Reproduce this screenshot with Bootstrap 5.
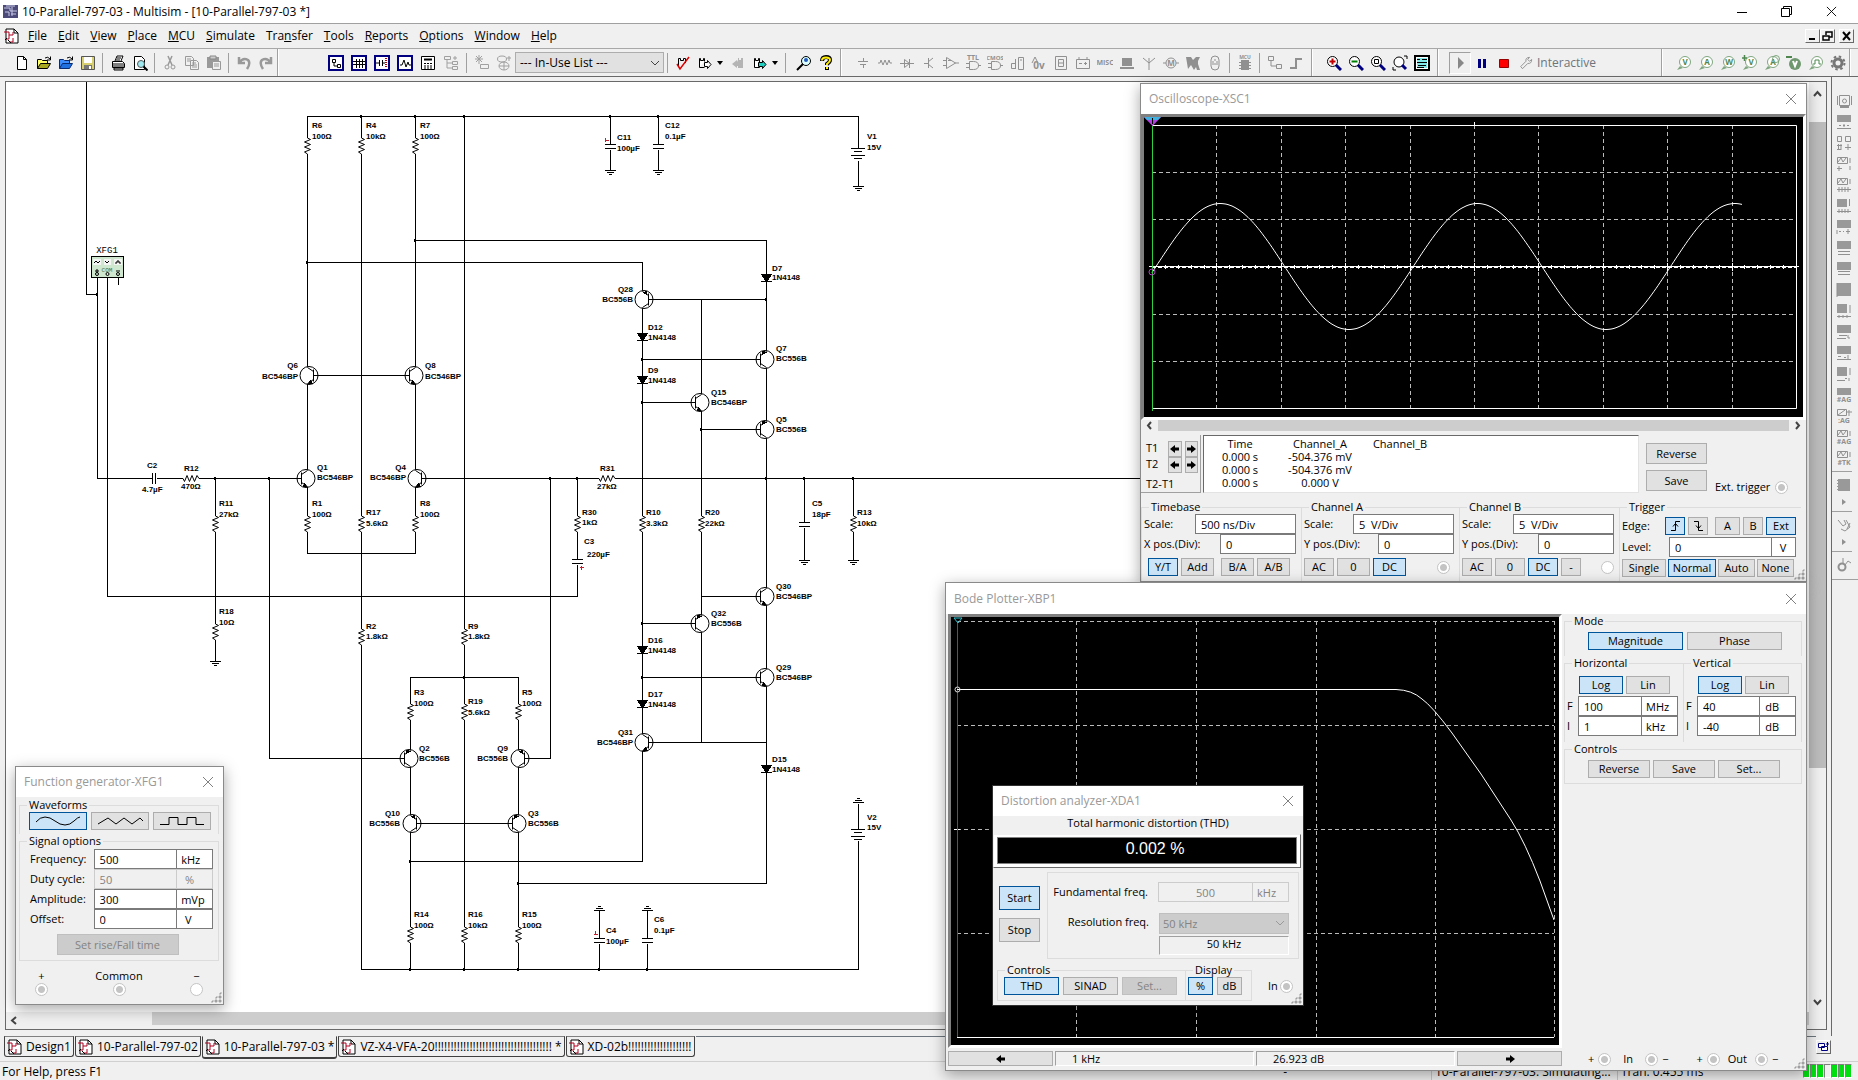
<!DOCTYPE html>
<html lang="en">
<head>
  <meta charset="UTF-8">
  <title>10-Parallel-797-03 - Multisim</title>
  <meta name="viewport" content="width=device-width, initial-scale=1">
  <!-- Bootstrap 5 CDN -->
  <link href="https://cdn.jsdelivr.net/npm/bootstrap@5.3.3/dist/css/bootstrap.min.css" rel="stylesheet">
  <style>
    body {
      background: #f0f0f0;
      color: #000;
      font-family: "Open Sans", "Noto Sans", sans-serif;
      font-size: 12px;
      line-height: 16px;
    }
    svg { display: block; }

    /* title bar, menu, toolbars */
    .titlebar { height: 24px; background: #fff; border-bottom: 1px solid #a0a0a0; padding-left: 3px; }
    .sysbtn { width: 45px; height: 22px; padding: 0; border: 0; background: none; }
    .menubar { height: 25px; border-bottom: 1px solid #a8a8a8; padding-left: 4px; }
    .menubar a { color: #000; text-decoration: none; margin-right: 11px; }
    .mdibtn { width: 15px; height: 14px; padding: 0; background: #f0f0f0; border: 1px solid; border-color: #fff #696969 #696969 #fff; }
    .toolrow { height: 28px; border-bottom: 1px solid #696969; }
    .band { height: 27px; border-right: 1px solid #a0a0a0; box-shadow: 1px 0 0 #fff; }
    .toolgap { width: 36px; }
    .padder { width: 3px; }
    .tool { width: 22px; height: 22px; padding: 3px; border: 0; background: none; }
    .tool.wide { width: 23px; }
    .tool.slim { width: 11px; padding: 3px 0; }
    .tool svg, .inst svg { width: 16px; height: 16px; }
    .tool.pressed { border: 1px solid; border-color: #a0a0a0 #fff #fff #a0a0a0; padding: 2px; }
    .vsep { width: 1px; height: 20px; margin: 0 4px 0 3px; background: #a0a0a0; }
    .uselist { width: 149px; height: 21px; border: 1px solid #adadad; border-radius: 0; background: #e1e1e1; padding: 0 4px; font-size: 12px; appearance: none; }

    /* work area */
    .sheet { margin: 4px 4px 6px 5px; border: 1px solid #696969; background: #fff; min-width: 0; }
    .schematic { width: 100%; height: 100%; }
    .vbar { width: 17px; background: #f0f0f0; }
    .hbar { height: 17px; background: #f0f0f0; }
    .thumb { background: #cdcdcd; }
    .vthumb { height: 646px; background: #bcbcbc; }
    .hlead { width: 146px; }
    .instbar { width: 27px; border-left: 1px solid #696969; }
    .inststrip { border-bottom: 1px solid #a0a0a0; padding: 13px 0 4px 0; }
    .inst { width: 24px; height: 21px; padding: 3px 4px; border: 0; background: none; }
    .inst.low { height: 13px; padding: 0 4px; }
    .inst.low svg { height: 10px; }
    .hsep { height: 1px; width: 20px; background: #a0a0a0; margin: 3px 0 2px 0; }

    /* sheet tabs and status line */
    .tabrow { height: 25px; }
    .sheettab { height: 21px; border: 1px solid #404040; border-top-color: #808080; border-radius: 0 0 3px 3px; background: #f0f0f0; padding: 0 2px; gap: 3px; color: #000; text-decoration: none; white-space: nowrap; margin-right: 1px; }
    .sheettab.current { height: 23px; border-top-color: #f0f0f0; border-bottom-width: 2px; }
    .statusrow { height: 19px; border-top: 1px solid #d0d0d0; padding: 2px 2px 0 2px; white-space: nowrap; }
    .cellpane { width: 186px; border-left: 1px solid #c8c8c8; padding-left: 3px; }
    .led { width: 7px; height: 14px; background: #00e010; border: 1px solid; border-color: #808080 #fff #fff #808080; }
    .led.off { background: #f0f0f0; }

    /* floating instrument windows */
    .inswin {
      position: absolute;
      background: #f0f0f0;
      border: 1px solid #8a8a8a;
      box-shadow: 0 4px 14px rgba(0, 0, 0, 0.35);
      font-size: 11px;
      line-height: 14px;
    }
    .inswin header { height: 30px; background: #fff; color: #999; font-size: 12px; padding: 0 5px 0 8px; }
    .closebtn { width: 20px; height: 20px; padding: 4px; border: 0; background: none; color: #808080; }
    .win-scope { top: 83px; right: 51px; width: 667px; }
    .win-bode { top: 582px; right: 51px; width: 862px; }
    .win-bode header { height: 31px; }
    .win-thd { top: 785px; right: 554px; width: 312px; border-color: #303030; }
    .win-fgen { top: 766px; left: 15px; width: 209px; }
    .display { background: #000; border: 3px solid; border-color: #808080 #fff #fff #808080; }
    .display svg { width: 100%; }
    .scope-plot { height: 300px; }
    .bode-plot { height: 428px; }

    .inswin fieldset { border: 1px solid #dcdcdc; border-width: 1px 0 0 1px; padding: 0 5px 0 2px; }
    .inswin fieldset.last-col { border-right-width: 1px; }
    .inswin fieldset.last-row { border-bottom-width: 1px; }
    .inswin legend { float: none; width: auto; font-size: 11px; line-height: 14px; margin: 0 0 0 5px; padding: 0 2px; }
    .key { height: 18px; padding: 0; border: 1px solid #adadad; border-radius: 0; background: #e1e1e1; color: #000; font-size: 11px; line-height: 14px; }
    .key.on { background: #cce4f7; border-color: #005499; }
    .key:disabled { background: #cccccc; border-color: #bfbfbf; color: #838383; opacity: 1; }
    .key svg { margin: auto; }
    .field { height: 20px; min-width: 0; border: 1px solid #7a7a7a; border-radius: 0; background: #fff; color: #000; padding: 0 5px; font-size: 11px; line-height: 14px; }
    .field:disabled { background: #f0f0f0; border-color: #cccccc; color: #838383; }
    .field + .field { margin-left: -1px; }
    .jack { appearance: none; width: 13px; height: 13px; margin: 0; border: 1px solid #c4c4c4; border-radius: 50%; background: #fff; }
    .jack:checked { background: radial-gradient(circle, #c4c4c4 0 3px, #fff 4px); }
    .sunken { border: 1px solid; border-color: #a0a0a0 #fff #fff #a0a0a0; }
    .grip { position: absolute; right: 1px; bottom: 1px; width: 12px; height: 12px; background: radial-gradient(circle at 2px 2px, #a0a0a0 1px, transparent 2px) 0 0 / 4px 4px; clip-path: polygon(100% 0, 100% 100%, 0 100%); }

    .w20 { width: 20px; } .w25 { width: 25px; } .w30 { width: 30px; } .w33 { width: 33px; } .w36 { width: 37px; }
    .w44 { width: 44px; } .w48 { width: 48px; } .w55 { width: 55px; } .w58 { width: 58px; } .w62 { width: 62px; }
    .w64 { width: 64px; } .w76 { width: 76px; } .w84 { width: 84px; } .w95 { width: 95px; } .w101 { width: 101px; }
    .gap2 { gap: 2px; } .gap3 { gap: 3px; } .gap4 { gap: 4px; }

    /* oscilloscope */
    .scrollline { height: 11px; }
    .cursors { width: 60px; height: 58px; border-right: 1px solid #a0a0a0; border-bottom: 1px solid #a0a0a0; padding: 6px 2px 0 5px; }
    .cursors .key { width: 14px; height: 16px; }
    .readout { width: 436px; height: 58px; background: #fff; border: 1px solid; border-color: #696969 #e3e3e3 #e3e3e3 #696969; }
    .readout table { margin: 1px 0 0 -4px; }
    .readout th, .readout td { width: 80px; padding: 0; font-weight: 400; text-align: center; line-height: 13px; }
    .scope-side { padding: 8px 0 0 5px; gap: 6px; }
    .scope-side .key { width: 61px; height: 21px; }
    .scope-ext { margin: 48px 0 0 6px; height: 8px; gap: 5px; }
    .g-time { width: 160px; } .g-cha { width: 158px; } .g-chb { width: 160px; } .g-trig { width: 182px; }
    .scope-groups { margin-top: 7px; height: 81px; }
    .keyrow { margin-top: 4px; }
    .level { width: 103px; }
    .edgerow { margin-top: 3px; }
    .tightrow { margin-top: 2px; }

    /* bode plotter */
    .bode-main { margin-left: 2px; }
    .bode-side { width: 238px; }
    .g-mode { height: 42px; }
    .g-axis { height: 86px; }
    .g-mode > div { margin-top: 4px; padding-left: 21px; }
    .axis-keys { margin: 6px 0 2px 12px; }
    .axis-row label { width: 11px; }
    .bode-foot { height: 15px; margin-top: 3px; }
    .bode-foot .key { width: 105px; height: 15px; line-height: 12px; }
    .bode-foot .sunken { width: 80px; line-height: 14px; height: 15px; }

    /* distortion analyzer */
    .meter { margin: 4px 2px 0 0; padding: 2px 3px 3px 3px; background: #fff; border: 1px solid; border-color: #f0f0f0 #696969 #696969 #f0f0f0; }
    .meter output { display: block; height: 27px; background: #000; color: #fff; border: 1px solid #808080; text-align: center; font: 16px/22px "Liberation Sans", Arial, sans-serif; padding-left: 16px; }
    .thd-mid { padding: 0 4px 0 6px; margin-top: 4px; }
    .thd-keys { padding-top: 14px; gap: 8px; }
    .thd-box { width: 252px; height: 87px; border: 1px solid #dcdcdc; padding: 9px 9px 0 0; }
    .thd-sel { width: 130px; height: 21px; margin-top: 11px; background: #cccccc; border: 1px solid #bfbfbf; color: #838383; font-size: 11px; padding: 0 3px; appearance: none; opacity: 1; border-radius: 0; }
    .thd-lbl { width: 100px; text-align: right; margin-right: 10px; }
    .thd-read { width: 130px; height: 19px; }
    .startkey { width: 41px; height: 24px; }
    .g-thd { width: 188px; height: 38px; }
    .g-disp { width: 67px; height: 38px; }

    /* function generator */
    .fgen-body { padding: 1px 4px 0 3px; }
    .g-wave { height: 36px; }
    .g-sig { height: 127px; }
    .g-wave > div { padding-left: 7px; gap: 4px; }
    .fgen-rows { padding: 1px 0 5px 8px; }
    .fgen-rows label { width: 64px; }
    .risekey { width: 122px; height: 21px; }
  </style>
</head>
<body class="vh-100 overflow-hidden d-flex flex-column">

  <!-- icon library -->
  <svg width="0" height="0" class="position-absolute">
    <defs>
      <symbol id="doc" viewBox="0 0 16 16"><path d="M2 1h8l4 4v10H2z" fill="#fff" stroke="#000"/><path d="M10 1v4h4" fill="none" stroke="#000"/><path d="M0 4h5v7H2M5 7h4V4M9 10v4H6" fill="none" stroke="#b00020"/><path d="M4 12l3 3M3 10l-2 2" stroke="#000"/></symbol>
      <symbol id="x" viewBox="0 0 12 12"><path d="M1 1l10 10M11 1L1 11" stroke="currentColor" fill="none"/></symbol>
      <symbol id="new" viewBox="0 0 16 16"><path d="M3.500 1.500h6l3 3v10h-9zM9.500 1.500v3h3" fill="#fff" stroke="#000"/></symbol>
      <symbol id="open" viewBox="0 0 16 16"><path d="M1.500 13.500v-9h4l1 1h5v3" fill="#ffff66" stroke="#000"/><path d="M1.500 13.500l3-5h10l-3 5z" fill="#a8a820" stroke="#000"/><path d="M9 3q3-2 5 1M14.500 1.500V5H11" fill="none" stroke="#000"/></symbol>
      <symbol id="openb" viewBox="0 0 16 16"><path d="M1.500 13.500v-9h4l1 1h5v3" fill="#3a8cff" stroke="#0a2a70"/><path d="M1.500 13.500l3-5h10l-3 5z" fill="#1f6fe0" stroke="#0a2a70"/><path d="M9 3q3-2 5 1M14.500 1.500V5H11" fill="none" stroke="#000"/></symbol>
      <symbol id="save" viewBox="0 0 16 16"><path d="M1.500 1.500h13v13h-13z" fill="#d8d070" stroke="#555"/><path d="M4 2h8v6H4z" fill="#fff"/><path d="M4 10h8v4H4z" fill="#777"/><path d="M9 11h2v3H9z" fill="#fff"/></symbol>
      <symbol id="print" viewBox="0 0 16 16"><path d="M5 6l2-5h6l-2 5M2.500 6.500h10l2 2v4h-12z" fill="#fff" stroke="#000"/><path d="M2 9h12M4 13h9v2H4zM2 11h12" stroke="#000" fill="#ccc"/><path d="M7 3h4M6 5h4" stroke="#000"/></symbol>
      <symbol id="preview" viewBox="0 0 16 16"><path d="M2.500 1.500h7l3 3v10h-10z" fill="#fff" stroke="#000"/><circle cx="9" cy="9" r="3.500" fill="#9fe8f0" stroke="#555"/><path d="M11.500 11.500l4 4" stroke="#000" stroke-width="2"/></symbol>
      <symbol id="cut" viewBox="0 0 16 16"><path d="M6 1l4 9M10 1L6 10" stroke="#999" stroke-width="1.500"/><circle cx="5" cy="12" r="2" fill="none" stroke="#999"/><circle cx="11" cy="12" r="2" fill="none" stroke="#999"/></symbol>
      <symbol id="copy" viewBox="0 0 16 16"><path d="M1.500 1.500h6l2 2v7h-8zM6.500 5.500h6l2 2v7h-8z" fill="#f0f0f0" stroke="#999"/><path d="M3 4h4M3 6h3M8 8h4M8 10h5M8 12h5" stroke="#999"/></symbol>
      <symbol id="paste" viewBox="0 0 16 16"><path d="M1 2h12v11H1z" fill="#999"/><path d="M4 1h6v3H4z" fill="#ccc" stroke="#888"/><path d="M6.500 6.500h8v8h-8z" fill="#f0f0f0" stroke="#999"/><path d="M8 9h5M8 11h5" stroke="#999"/></symbol>
      <symbol id="undo" viewBox="0 0 16 16"><path d="M3 2v6h6M3 8q4-6 9-3q3 3-1 9" fill="none" stroke="#999" stroke-width="2.500"/></symbol>
      <symbol id="redo" viewBox="0 0 16 16"><path d="M13 2v6H7M13 8Q9 2 4 5q-3 3 1 9" fill="none" stroke="#999" stroke-width="2.500"/></symbol>
      <symbol id="pane1" viewBox="0 0 16 16"><path d="M1 1h14v14H1z" fill="#fff" stroke="#000080" stroke-width="2"/><path d="M4.500 4.500h3v3h-3zM9.500 9.500h3v3h-3zM6 8v3h3" fill="none" stroke="#000"/></symbol>
      <symbol id="pane2" viewBox="0 0 16 16"><path d="M1 1h14v14H1z" fill="#fff" stroke="#000080" stroke-width="2"/><path d="M2 6.500h12M2 9.500h12M5.500 4v9M8.500 4v9M11.500 4v9" stroke="#000"/></symbol>
      <symbol id="pane3" viewBox="0 0 16 16"><path d="M1 1h14v14H1z" fill="#fff" stroke="#000080" stroke-width="2"/><path d="M2 8h3M5.500 5v6M8.500 5v6M9 8h2" stroke="#000"/><path d="M12 3v10" stroke="#c00000" stroke-width="2" stroke-dasharray="1 1"/></symbol>
      <symbol id="pane4" viewBox="0 0 16 16"><path d="M1 1h14v14H1z" fill="#fff" stroke="#000080" stroke-width="2"/><path d="M3 10h2l2-5 2 7 2-5 1 3h2" fill="none" stroke="#000"/></symbol>
      <symbol id="calc" viewBox="0 0 16 16"><path d="M1.500 1.500h13v13h-13z" fill="#fff" stroke="#000"/><path d="M4 4.500h8" stroke="#000" stroke-width="2"/><path d="M4 8.500h9M4 11h9M4 13h9" stroke="#000" stroke-dasharray="2 1"/></symbol>
      <symbol id="tree" viewBox="0 0 16 16"><path d="M1.500 1.500h6v3h-6zM9.500 6.500h5v3h-5zM9.500 11.500h5v3h-5zM4 5v8h5M4 8h5M12 1v4M10 3h4" fill="none" stroke="#a0a0a0"/></symbol>
      <symbol id="star" viewBox="0 0 16 16"><path d="M5 0v9M1 4h8M2 1l6 6M8 1L2 7" stroke="#a0a0a0"/><path d="M6.500 9.500h8v4h-8z" fill="none" stroke="#a0a0a0"/></symbol>
      <symbol id="db" viewBox="0 0 16 16"><ellipse cx="6" cy="4" rx="4.500" ry="3" fill="none" stroke="#a0a0a0"/><ellipse cx="8" cy="11" rx="5" ry="4" fill="none" stroke="#a0a0a0"/><path d="M3 11h10M8 7v8M13 1v5M11 3h4" stroke="#a0a0a0"/></symbol>
      <symbol id="erc" viewBox="0 0 16 16"><path d="M3.500 12V3.500h2v2h3v-2h2V8" fill="none" stroke="#000"/><path d="M2 9l3 5L14 2" fill="none" stroke="#e00000" stroke-width="1.500"/></symbol>
      <symbol id="fwd" viewBox="0 0 16 16"><path d="M2.500 12.500V3.500h1v2h3v-2h1v3M2.500 12.500h5M7.500 7.500h3V5.500l3.500 4-3.500 4v-2h-3z" fill="#fff" stroke="#000"/></symbol>
      <symbol id="bck" viewBox="0 0 16 16"><path d="M13 13V3h-2v2H9V3H8v4L7 5 2 9l5 4v-2h1v2z" fill="#b4b4b4"/></symbol>
      <symbol id="fwdc" viewBox="0 0 16 16"><path d="M2.500 12.500V3.500h1v2h3v-2h1v9z" fill="#fff" stroke="#000"/><path d="M6.500 7.500h4V5.500l3.500 4-3.500 4v-2h-4z" fill="#20d0c0" stroke="#000"/></symbol>
      <symbol id="caret" viewBox="0 0 11 16"><path d="M2 6h6l-3 4z" fill="#000"/></symbol>
      <symbol id="find" viewBox="0 0 16 16"><circle cx="10" cy="6" r="4.500" fill="#dff" stroke="#000"/><circle cx="10" cy="5" r="2" fill="#225ac0"/><path d="M7 9l-6 6" stroke="#000" stroke-width="2"/></symbol>
      <symbol id="help" viewBox="0 0 16 16"><path d="M4 6q0-4 4-4t4 3q0 2-3 4v1M9 12v3" fill="none" stroke="#000" stroke-width="4"/><path d="M4 5.500q0-3 4-3t4 2.500q0 2-3 4v1M9 12v2" fill="none" stroke="#ffee00" stroke-width="2"/></symbol>
      <symbol id="zin" viewBox="0 0 16 16"><circle cx="6.500" cy="6.500" r="5" fill="#fff" stroke="#000"/><path d="M10 10l5 5" stroke="#000080" stroke-width="3"/><path d="M6.500 3.500v6M3.500 6.500h6" stroke="#c00000" stroke-width="2"/></symbol>
      <symbol id="zout" viewBox="0 0 16 16"><circle cx="6.500" cy="6.500" r="5" fill="#fff" stroke="#000"/><path d="M10 10l5 5" stroke="#000080" stroke-width="3"/><path d="M3.500 6.500h6" stroke="#008000" stroke-width="2"/></symbol>
      <symbol id="zarea" viewBox="0 0 16 16"><circle cx="6.500" cy="6.500" r="5" fill="#fff" stroke="#000"/><path d="M10 10l5 5" stroke="#000080" stroke-width="3"/><path d="M4.500 4.500h4v4h-4z" fill="none" stroke="#000"/></symbol>
      <symbol id="zfit" viewBox="0 0 16 16"><circle cx="7" cy="7" r="5" fill="#fff" stroke="#000"/><path d="M10 10l4 4" stroke="#000080" stroke-width="3"/><path d="M12 1h3v3M1 12v3h3" fill="none" stroke="#000"/></symbol>
      <symbol id="zfull" viewBox="0 0 16 16"><path d="M1 1h14v14H1z" fill="#fff" stroke="#000" stroke-width="2"/><path d="M3 3h10v10H3z" fill="#7fe8e8"/><path d="M3 4.500h3M8 4.500h5M3 7.500h10M4 10.500h8M3 12.500h7" stroke="#000"/></symbol>
      <symbol id="play" viewBox="0 0 16 16"><path d="M6 2v12l6-6z" fill="#888"/></symbol>
      <symbol id="pause" viewBox="0 0 16 16"><path d="M4 4h3v9H4zM9 4h3v9H9z" fill="#000080"/></symbol>
      <symbol id="stop" viewBox="0 0 16 16"><path d="M3.500 4.500h9v8h-9z" fill="#f00" stroke="#900"/></symbol>
      <symbol id="wrench" viewBox="0 0 16 16"><path d="M2 12l6-6q-1-4 4-4.500L10 4l2 2 2.500-2q0 5-4.500 4.500l-6 6z" fill="#f0f0f0" stroke="#888"/></symbol>
      <symbol id="gear" viewBox="0 0 16 16"><circle cx="8" cy="8" r="4" fill="none" stroke="#777" stroke-width="3"/><circle cx="8" cy="8" r="6.500" fill="none" stroke="#777" stroke-width="2" stroke-dasharray="2.500 2.600"/></symbol>
      <symbol id="chip" viewBox="0 0 16 16"><path d="M2 2h12v12H2z" fill="#999"/><path d="M1 3.500h14M1 6.500h14M1 9.500h14M1 12.500h14" stroke="#999" stroke-dasharray="2 12"/></symbol>
    </defs>
  </svg>

  <!-- title bar -->
  <div class="titlebar d-flex align-items-center flex-shrink-0">
    <svg width="15" height="15" viewBox="0 0 15 15"><path d="M0 1h15v13H0z" fill="#4b4a78"/><path d="M1 4h6v3h7M2 8h4v4M8 10h5M9 3v9M3 2h9" fill="none" stroke="#c9c8e8"/></svg>
    <span class="ms-1">10-Parallel-797-03 - Multisim - [10-Parallel-797-03 *]</span>
    <button class="sysbtn ms-auto" aria-label="Minimize"><svg class="mx-auto" width="10" height="10"><path d="M0 5.500h10" stroke="#000"/></svg></button>
    <button class="sysbtn" aria-label="Restore"><svg class="mx-auto" width="11" height="11"><path d="M.5 2.500h8v8h-8zM2.500 2.500v-2h8v8h-2" fill="none" stroke="#000"/></svg></button>
    <button class="sysbtn me-1" aria-label="Close"><svg class="mx-auto" width="11" height="11"><use href="#x"/></svg></button>
  </div>

  <!-- menu -->
  <nav class="menubar d-flex align-items-center flex-shrink-0">
    <svg width="16" height="16"><use href="#doc"/></svg>
    <div class="d-flex ms-2" id="menu"></div>
    <button class="mdibtn ms-auto me-0" aria-label="Minimize sheet"><svg width="13" height="12"><path d="M3 9h6" stroke="#000" stroke-width="2"/></svg></button>
    <button class="mdibtn" aria-label="Restore sheet"><svg width="13" height="12"><path d="M2 6h6v4H2zM5 5V2h6v5H8" fill="none" stroke="#000" stroke-width="1.500"/></svg></button>
    <button class="mdibtn ms-1 me-1" aria-label="Close sheet"><svg width="13" height="12"><path d="M3 2l7 8M10 2l-7 8" stroke="#000" stroke-width="2"/></svg></button>
  </nav>

  <!-- toolbars -->
  <div class="toolrow d-flex flex-shrink-0">
    <div class="band d-flex align-items-center ps-2" data-tools="pad new open openb save | print preview | cut copy paste | undo redo"></div>
    <div class="toolgap"></div>
    <div class="band d-flex align-items-center">
      <div class="d-flex align-items-center ps-2" data-tools="pad pane1+ pane2+ pane3+ pane4+ calc+ tree+ | star db"></div>
      <div class="position-relative">
        <select class="uselist" aria-label="In-Use List"><option>--- In-Use List ---</option></select>
        <svg class="position-absolute end-0 top-0 mt-2 me-1" width="10" height="6"><path d="M1 1l4 4 4-4" fill="none" stroke="#444"/></svg>
      </div>
      <div class="d-flex align-items-center" data-tools="| erc fwd caret bck fwdc caret | pad find help pad"></div>
    </div>
    <div class="band d-flex align-items-center ps-2" id="parts"></div>
    <div class="band d-flex align-items-center ps-2 pe-1" data-tools="pad zin zout zarea zfit zfull"></div>
    <div class="band d-flex align-items-center flex-grow-1 ps-2">
      <div class="padder"></div>
      <button class="tool pressed" aria-label="Run"><svg><use href="#play"/></svg></button>
      <button class="tool mx-0" aria-label="Pause"><svg><use href="#pause"/></svg></button>
      <button class="tool" aria-label="Stop"><svg><use href="#stop"/></svg></button>
      <svg class="ms-1" width="14" height="14"><use href="#wrench"/></svg>
      <span class="text-secondary ps-1">Interactive</span>
    </div>
    <div class="band d-flex align-items-center ps-2 me-2" id="probes"></div>
  </div>

  <!-- work area -->
  <div class="d-flex flex-grow-1 overflow-hidden">
    <main class="sheet d-flex flex-column flex-grow-1">
      <div class="d-flex flex-grow-1 overflow-hidden">
        <div class="flex-grow-1 overflow-hidden"><svg class="schematic" id="schematic"></svg></div>
        <div class="vbar d-flex flex-column align-items-center">
          <svg class="my-2" width="9" height="24"><path d="M1 6l3.500-4L8 6" fill="none" stroke="#444" stroke-width="2"/></svg>
          <div class="vthumb w-100"></div>
          <svg class="mt-auto mb-1" width="9" height="10"><path d="M1 2l3.500 4L8 2" fill="none" stroke="#444" stroke-width="2"/></svg>
        </div>
      </div>
      <div class="hbar d-flex">
        <div class="hlead d-flex align-items-center"><svg class="ms-1" width="8" height="9"><path d="M6 1L2 4.500 6 8" fill="none" stroke="#444" stroke-width="2"/></svg></div>
        <div class="thumb flex-grow-1 mb-1"></div>
        <div class="vbar"></div>
      </div>
    </main>
    <aside class="instbar flex-shrink-0"><div class="inststrip d-flex flex-column" id="instruments"></div></aside>
  </div>

  <!-- sheet tabs -->
  <div class="tabrow d-flex flex-shrink-0 ps-1">
    <a href="#" class="sheettab d-flex align-items-center"><svg width="16" height="16"><use href="#doc"/></svg>Design1</a>
    <a href="#" class="sheettab d-flex align-items-center"><svg width="16" height="16"><use href="#doc"/></svg>10-Parallel-797-02</a>
    <a href="#" class="sheettab current d-flex align-items-center"><svg width="16" height="16"><use href="#doc"/></svg>10-Parallel-797-03 *</a>
    <a href="#" class="sheettab d-flex align-items-center"><svg width="16" height="16"><use href="#doc"/></svg>VZ-X4-VFA-20!!!!!!!!!!!!!!!!!!!!!!!!!!!!!!!!!!!!! *</a>
    <a href="#" class="sheettab d-flex align-items-center"><svg width="16" height="16"><use href="#doc"/></svg>XD-02b!!!!!!!!!!!!!!!!!!!!</a>
    <div class="flex-grow-1 border-top border-secondary"></div>
    <button class="mdibtn mt-1" aria-label="Window list"><svg width="13" height="12"><path d="M1.500 2.500h6v4h-6zM4.500 5.500h6v4h-6zM9 3h3M10.500 1v4" fill="#fff" stroke="#000080"/></svg></button>
    <div class="instbar border-0"></div>
  </div>

  <!-- status line -->
  <div class="statusrow d-flex flex-shrink-0">
    <span class="flex-grow-1">For Help, press F1</span>
    <div class="d-flex">
      <span class="pe-5 me-5">-</span>
      <span class="cellpane ms-5">10-Parallel-797-03: Simulating...</span>
      <span class="cellpane">Tran: 0.455 ms</span>
    </div>
    <div class="d-flex gap-0 pe-1" id="leds"></div>
  </div>

  <!-- Oscilloscope -->
  <section class="inswin win-scope">
    <header class="d-flex align-items-center justify-content-between"><span>Oscilloscope-XSC1</span>
      <button class="closebtn" aria-label="Close oscilloscope"><svg width="12" height="12"><use href="#x"/></svg></button></header>
    <div class="display"><svg class="scope-plot" viewBox="0 0 659 300" preserveAspectRatio="none" id="scopePlot"></svg></div>
    <div class="scrollline d-flex align-items-center px-1">
      <svg width="9" height="9"><path d="M6 1L3 4.500 6 8" fill="none" stroke="#444" stroke-width="2"/></svg>
      <div class="thumb flex-grow-1 h-100 mx-1"></div>
      <svg width="9" height="9"><path d="M3 1l3 3.500L3 8" fill="none" stroke="#444" stroke-width="2"/></svg>
    </div>
    <div class="d-flex gap2 mt-1">
      <div class="cursors">
        <div class="d-flex gap3"><span class="w20">T1</span><button class="key" aria-label="T1 left"><svg width="10" height="10"><path d="M0 5l5-4v2.500h4v3H5V9z"/></svg></button><button class="key" aria-label="T1 right"><svg width="10" height="10"><path d="M10 5L5 1v2.500H1v3h4V9z"/></svg></button></div>
        <div class="d-flex gap3"><span class="w20">T2</span><button class="key" aria-label="T2 left"><svg width="10" height="10"><path d="M0 5l5-4v2.500h4v3H5V9z"/></svg></button><button class="key" aria-label="T2 right"><svg width="10" height="10"><path d="M10 5L5 1v2.500H1v3h4V9z"/></svg></button></div>
        <div class="mt-1">T2-T1</div>
      </div>
      <div class="readout">
        <table>
          <tr><th>Time</th><th>Channel_A</th><th>Channel_B</th></tr>
          <tr><td>0.000 s</td><td>-504.376 mV</td><td></td></tr>
          <tr><td>0.000 s</td><td>-504.376 mV</td><td></td></tr>
          <tr><td>0.000 s</td><td>0.000 V</td><td></td></tr>
        </table>
      </div>
      <div class="scope-side d-flex flex-column"><button class="key">Reverse</button><button class="key">Save</button></div>
      <div class="scope-ext d-flex align-items-center"><label for="extTrig">Ext. trigger</label><input type="radio" class="jack" id="extTrig" name="extTrig" checked></div>
    </div>
    <div class="scope-groups d-flex">
      <fieldset class="g-time">
        <legend>Timebase</legend>
        <div class="d-flex align-items-center justify-content-between"><label for="tbScale">Scale:</label><input class="field w101" id="tbScale" value="500 ns/Div"></div>
        <div class="d-flex align-items-center justify-content-between"><label for="tbPos">X pos.(Div):</label><input class="field w76" id="tbPos" value="0"></div>
        <div class="d-flex keyrow gap3 ps-1"><button class="key on w30">Y/T</button><button class="key w33">Add</button><button class="key w33 ms-1">B/A</button><button class="key w33">A/B</button></div>
      </fieldset>
      <fieldset class="g-cha">
        <legend>Channel A</legend>
        <div class="d-flex align-items-center justify-content-between"><label for="aScale">Scale:</label><input class="field w101" id="aScale" value="5  V/Div"></div>
        <div class="d-flex align-items-center justify-content-between"><label for="aPos">Y pos.(Div):</label><input class="field w76" id="aPos" value="0"></div>
        <div class="d-flex keyrow gap3 align-items-center"><button class="key w30">AC</button><button class="key w33">0</button><button class="key on w33">DC</button><input type="radio" class="jack ms-auto me-1" name="chA" aria-label="Channel A input" checked></div>
      </fieldset>
      <fieldset class="g-chb">
        <legend>Channel B</legend>
        <div class="d-flex align-items-center justify-content-between"><label for="bScale">Scale:</label><input class="field w101" id="bScale" value="5  V/Div"></div>
        <div class="d-flex align-items-center justify-content-between"><label for="bPos">Y pos.(Div):</label><input class="field w76" id="bPos" value="0"></div>
        <div class="d-flex keyrow gap3 align-items-center"><button class="key w30">AC</button><button class="key w30">0</button><button class="key on w30">DC</button><button class="key w20">-</button><input type="radio" class="jack ms-auto" name="chB" aria-label="Channel B input"></div>
      </fieldset>
      <fieldset class="g-trig">
        <legend>Trigger</legend>
        <div class="d-flex align-items-center gap3 edgerow"><span class="flex-grow-1">Edge:</span>
          <button class="key on w20" aria-label="Rising edge"><svg width="13" height="12"><path d="M2 10.500h4.500v-9H11M4 6.500l2.500-3 2.500 3" fill="none" stroke="#000"/></svg></button>
          <button class="key w20" aria-label="Falling edge"><svg width="13" height="12"><path d="M2 1.500h4.500v9H11M4 5.500l2.500 3 2.500-3" fill="none" stroke="#000"/></svg></button>
          <button class="key w25 ms-1">A</button><button class="key w20">B</button><button class="key on w30">Ext</button></div>
        <div class="d-flex align-items-center tightrow"><label class="flex-grow-1" for="trLevel">Level:</label><input class="field level" id="trLevel" value="0"><input class="field w25" aria-label="Level unit" value=" V"></div>
        <div class="d-flex gap2 tightrow"><button class="key w44">Single</button><button class="key on w48">Normal</button><button class="key w36">Auto</button><button class="key w36">None</button></div>
      </fieldset>
    </div>
    <div class="grip"></div>
  </section>

  <!-- Bode plotter -->
  <section class="inswin win-bode">
    <header class="d-flex align-items-center justify-content-between"><span>Bode Plotter-XBP1</span>
      <button class="closebtn" aria-label="Close bode plotter"><svg width="12" height="12"><use href="#x"/></svg></button></header>
    <div class="d-flex gap2 pb-1">
      <div class="flex-grow-1 bode-main">
        <div class="display"><svg class="bode-plot" viewBox="1 0 608 428" preserveAspectRatio="none" id="bodePlot"></svg></div>
        <div class="bode-foot d-flex gap2">
          <button class="key" aria-label="Cursor left"><svg width="10" height="10"><path d="M0 5l5-4v2.500h4v3H5V9z"/></svg></button>
          <div class="sunken flex-fill ps-3">1 kHz</div>
          <div class="sunken flex-fill ps-3">26.923 dB</div>
          <button class="key" aria-label="Cursor right"><svg width="10" height="10"><path d="M10 5L5 1v2.500H1v3h4V9z"/></svg></button>
        </div>
      </div>
      <div class="bode-side d-flex flex-column me-1">
        <fieldset class="last-col g-mode">
          <legend>Mode</legend>
          <div class="d-flex gap4"><button class="key on w95">Magnitude</button><button class="key w95">Phase</button></div>
        </fieldset>
        <div class="d-flex">
          <fieldset class="w-50 g-axis">
            <legend>Horizontal</legend>
            <div class="d-flex gap3 axis-keys"><button class="key on w44">Log</button><button class="key w44">Lin</button></div>
            <div class="d-flex align-items-center axis-row"><label for="hF">F</label><input class="field w64" id="hF" value="100"><input class="field w36 px-1" aria-label="F unit" value="MHz"></div>
            <div class="d-flex align-items-center axis-row"><label for="hI">I</label><input class="field w64" id="hI" value="1"><input class="field w36 px-1" aria-label="I unit" value="kHz"></div>
          </fieldset>
          <fieldset class="w-50 last-col g-axis">
            <legend>Vertical</legend>
            <div class="d-flex gap3 axis-keys"><button class="key on w44">Log</button><button class="key w44">Lin</button></div>
            <div class="d-flex align-items-center axis-row"><label for="vF">F</label><input class="field w64" id="vF" value="40"><input class="field w36" aria-label="F unit" value="dB"></div>
            <div class="d-flex align-items-center axis-row"><label for="vI">I</label><input class="field w64" id="vI" value="-40"><input class="field w36" aria-label="I unit" value="dB"></div>
          </fieldset>
        </div>
        <fieldset class="last-col last-row g-mode">
          <legend>Controls</legend>
          <div class="d-flex gap3"><button class="key w62">Reverse</button><button class="key w62">Save</button><button class="key w62">Set...</button></div>
        </fieldset>
        <div class="d-flex align-items-center mt-auto gap4 ps-4">
          <span>+</span><input type="radio" class="jack" name="in1" aria-label="In plus" checked><span class="px-2">In</span><input type="radio" class="jack" name="in2" aria-label="In minus" checked><span>−</span>
          <span class="ms-4">+</span><input type="radio" class="jack" name="out1" aria-label="Out plus" checked><span class="px-1">Out</span><input type="radio" class="jack" name="out2" aria-label="Out minus" checked><span>−</span>
        </div>
      </div>
    </div>
    <div class="grip"></div>
  </section>

  <!-- Distortion analyzer -->
  <section class="inswin win-thd">
    <header class="d-flex align-items-center justify-content-between"><span>Distortion analyzer-XDA1</span>
      <button class="closebtn" aria-label="Close distortion analyzer"><svg width="12" height="12"><use href="#x"/></svg></button></header>
    <div class="text-center">Total harmonic distortion (THD)</div>
    <div class="meter"><output>0.002 %</output></div>
    <div class="thd-mid d-flex justify-content-between">
      <div class="thd-keys d-flex flex-column"><button class="key on startkey">Start</button><button class="key startkey">Stop</button></div>
      <div class="thd-box">
        <div class="d-flex align-items-center justify-content-end"><label class="thd-lbl" for="fund">Fundamental freq.</label><input class="field w95 text-center" id="fund" value="500" disabled><input class="field w36 px-1" aria-label="Frequency unit" value="kHz" disabled></div>
        <div class="d-flex align-items-center justify-content-end position-relative"><label class="thd-lbl mt-2" for="resf">Resolution freq.</label><select class="thd-sel" id="resf" disabled><option>50 kHz</option></select>
          <svg class="position-absolute end-0 bottom-0 mb-2 me-1" width="10" height="6"><path d="M1 1l4 4 4-4" fill="none" stroke="#999"/></svg></div>
        <div class="d-flex justify-content-end"><div class="thd-read sunken text-center tightrow">50 kHz</div></div>
      </div>
    </div>
    <div class="d-flex ps-1 mt-1 pb-1">
      <fieldset class="g-thd last-row">
        <legend>Controls</legend>
        <div class="d-flex ps-1 gap4"><button class="key on w55">THD</button><button class="key w55">SINAD</button><button class="key w55" disabled>Set...</button></div>
      </fieldset>
      <fieldset class="g-disp last-row last-col">
        <legend>Display</legend>
        <div class="d-flex gap4"><button class="key on w25">%</button><button class="key w25">dB</button></div>
      </fieldset>
      <div class="d-flex align-items-center gap2 ps-3 pt-2"><label for="thdIn">In</label><input type="radio" class="jack" id="thdIn" name="thdIn" checked></div>
    </div>
    <div class="grip"></div>
  </section>

  <!-- Function generator -->
  <section class="inswin win-fgen">
    <header class="d-flex align-items-center justify-content-between"><span>Function generator-XFG1</span>
      <button class="closebtn" aria-label="Close function generator"><svg width="12" height="12"><use href="#x"/></svg></button></header>
    <div class="fgen-body">
      <fieldset class="g-wave last-col">
        <legend>Waveforms</legend>
        <div class="d-flex">
          <button class="key on w58" aria-label="Sine"><svg width="46" height="12"><path d="M1 7q4-5 9-5t10 4 10 4 9-4 6-4" fill="none" stroke="#000"/></svg></button>
          <button class="key w58" aria-label="Triangle"><svg width="46" height="12"><path d="M1 9l10-6 8 6 8-6 8 6 8-6 3 3" fill="none" stroke="#000"/></svg></button>
          <button class="key w58" aria-label="Square"><svg width="46" height="12"><path d="M1 9.500h9v-7h9v7h9v-7h9v7h8" fill="none" stroke="#000"/></svg></button>
        </div>
      </fieldset>
      <fieldset class="g-sig last-col last-row">
        <legend>Signal options</legend>
        <div class="fgen-rows">
          <div class="d-flex align-items-center"><label for="fFreq">Frequency:</label><input class="field w84" id="fFreq" value="500"><input class="field w36 px-1" aria-label="Frequency unit" value="kHz"></div>
          <div class="d-flex align-items-center"><label for="fDuty">Duty cycle:</label><input class="field w84" id="fDuty" value="50" disabled><input class="field w36" aria-label="Duty unit" value=" %" disabled></div>
          <div class="d-flex align-items-center"><label for="fAmp">Amplitude:</label><input class="field w84" id="fAmp" value="300"><input class="field w36 px-1" aria-label="Amplitude unit" value="mVp"></div>
          <div class="d-flex align-items-center"><label for="fOff">Offset:</label><input class="field w84" id="fOff" value="0"><input class="field w36" aria-label="Offset unit" value=" V"></div>
        </div>
        <div class="d-flex justify-content-center"><button class="key risekey" disabled>Set rise/Fall time</button></div>
      </fieldset>
      <div class="d-flex justify-content-between px-3 pt-2 pb-2">
        <div class="d-flex flex-column align-items-center"><label for="jp">+</label><input type="radio" class="jack" id="jp" name="jp" checked></div>
        <div class="d-flex flex-column align-items-center"><label for="jc">Common</label><input type="radio" class="jack" id="jc" name="jc" checked></div>
        <div class="d-flex flex-column align-items-center"><label for="jm">−</label><input type="radio" class="jack" id="jm" name="jm"></div>
      </div>
    </div>
    <div class="grip"></div>
  </section>

  <!-- Bootstrap JS & drawing script -->
  <script src="https://cdn.jsdelivr.net/npm/bootstrap@5.3.3/dist/js/bootstrap.bundle.min.js"></script>
  <script>
    // menu entries, & marks the access key
    const menuItems = ['&File', '&Edit', '&View', '&Place', '&MCU', '&Simulate', 'Tra&nsfer', '&Tools', '&Reports', '&Options', '&Window', '&Help'];
    document.getElementById('menu').innerHTML = menuItems.map(t =>
      '<a href="#">' + t.replace(/&(.)/, '<u>$1</u>') + '</a>').join('');

    // toolbars built from their icon names, | is a separator
    document.querySelectorAll('[data-tools]').forEach(el => {
      el.innerHTML += el.dataset.tools.split(' ').map(n => {
        if (n === '|') return '<div class="vsep"></div>';
        if (n === 'pad') return '<div class="padder"></div>';
        const wide = n.endsWith('+');
        const id = n.replace('+', '');
        if (id === 'caret') return '<button class="tool slim" aria-label="More"><svg viewBox="0 0 16 16"><path d="M1 6h6l-3 4z"/></svg></button>';
        return `<button class="tool${wide ? ' wide' : ''}" aria-label="${id}"><svg><use href="#${id}"/></svg></button>`;
      }).join('');
    });

    // component palette
    const g = d => `<path d="${d}" fill="none" stroke="#909090"/>`;
    const t = (s, y, size) => `<text x="8" y="${y}" font-size="${size}" font-weight="700" text-anchor="middle" fill="#909090">${s}</text>`;
    const parts = [
      g('M3 6.500h10M5 9.500h6M8.500 3v3M8.500 10v3'),
      g('M1 8h2l1-3 2 5 2-5 2 5 2-5 1 3h2'),
      g('M1 8.500h14M5.500 4.500v8l5-4zM10.500 4v9'),
      g('M3 8.500h4M7.500 3v10M7 7l5-4M7 9l5 4'),
      g('M3.500 2.500v11l9-5.500zM0 5.500h3M0 10.500h3M12 8h4M5 5.500h3'),
      t('TTL', 5, 7) + g('M4.500 6.500h4q5 0 5 4t-5 4h-4zM1 8.500h3M1 12.500h3M13 10.500h3'),
      t('CMOS', 5, 6) + g('M4.500 6.500h4q5 0 5 4t-5 4h-4zM1 8.500h3M1 12.500h3M13 10.500h3'),
      g('M9.500 14.500v-12h5v12zM6.500 4v10M6 8.500H2.500v5H6M11 5h2'),
      g('M1 8l3-6 3 6') + t('0v', 14, 10),
      g('M2.500 1.500h11v13h-11zM5.500 4.500h5v7h-5zM5.500 8h5'),
      g('M1.500 4.500h13v9h-13zM4 4V2M12 4V2M4 8.500h3M9 8.500h3M10.500 7v3'),
      t('MISC', 10, 7),
      '<path d="M3 3h10v8H3zM1 12h14v2H1z" fill="#909090"/>',
      g('M8 15V8M2 3l6 5 6-5M8 3v5'),
      '<circle cx="8" cy="8" r="5" fill="none" stroke="#909090"/>' + t('M', 11, 8) + g('M0 8h3M13 8h3'),
      '<path d="M1 2h5l2 3 3-3h4l-2 4v3l2 6h-3l-1-3-2 3-3-5-3 4z" fill="#909090"/>',
      g('M8 1q4 0 4 4v6q0 4-4 4t-4-4V5q0-4 4-4M8 4v2M8 8v2M6 6v4M10 6v4'),
      '|',
      '<path d="M4 5h8v10H4z" fill="#909090"/>' + g('M2 7.500h12M2 10.500h12M2 13.500h12') + t('MCU', 4, 5),
      '|',
      g('M1.500 1.500h5v4h-5zM9.500 9.500h5v4h-5zM4 6v5h5'),
      '<path d="M1 13h6V4h6" fill="none" stroke="#909090" stroke-width="2"/>'
    ];
    const svgTool = p => p === '|' ? '<div class="vsep"></div>' : `<button class="tool" aria-label="Component"><svg viewBox="0 0 16 16">${p}</svg></button>`;
    document.getElementById('parts').innerHTML = '<div class="padder"></div>' + parts.map(svgTool).join('') + '<div class="padder"></div>';

    // probes
    const probe = s => `<circle cx="9" cy="7" r="5.500" fill="#fff" stroke="#7fa67f"/><path d="M1 15l3-4 3 2z" fill="#7fa67f"/><text x="9" y="10" font-size="8" font-weight="700" text-anchor="middle" fill="#4f864f">${s}</text>`;
    document.getElementById('probes').innerHTML = '<div class="padder"></div>' + [
      probe('V'), probe('A'), probe('W'),
      probe('V') + '<path d="M0 3h5M2.500 0v6" stroke="#4f864f" stroke-width="1.500"/>',
      probe('A') + '<circle cx="12" cy="4" r="3.500" fill="none" stroke="#7fa67f"/>',
      '<circle cx="9" cy="9" r="6" fill="#6f986f"/><path d="M0 2h6" stroke="#4f864f" stroke-width="2"/><path d="M7 6l2 5 2-5" fill="none" stroke="#fff" stroke-width="2"/>',
      probe('') + '<path d="M5 9h2V5h4v4h2" fill="none" stroke="#4f864f"/>',
      '<use href="#gear"/>'
    ].map(svgTool).join('');

    // instrument strip
    const block = (w, h, rest) => `<path d="M1 1h${w}v${h}H1z" fill="#999"/>` + g(rest);
    const outline = rest => g('M1.500 1.500h10v6h-10zM2 6l3-4 2 4 3-4M14 2v5' + rest);
    const inst = [
      g('M3.500 2.500h10v10h-10zM1.500 3v9M15.500 3v9') + '<circle cx="8.500" cy="8" r="2" fill="none" stroke="#909090"/><path d="M4 13h9v2H4z" fill="#909090"/>',
      block(14, 7, 'M3 11.500h2M7 11.500h2M11 11.500h2M1 14.500h14M8 10v3'),
      g('M1.500 1.500h4v5h-4zM9.500 1.500h5v5h-5zM1 10.500h5M2.500 9v6M5 9v6M9 12.500h6M12 9v6M1 14.500h4'),
      outline('M1 12.500h5M3 10v5M14 10v4'),
      outline('M3 10v5M6 10v5M9 10v5M12 10v5M1 12.500h14'),
      block(10, 8, 'M13.500 1v7M3 11v4M6 11v4M9 11v4M12 11v4M1 13.500h14'),
      block(14, 8, 'M3 12.500h2M7 12.500h1M10 12.500h4M12 10v5M1 15v-4'),
      block(14, 8, 'M2 11.500h12M2 14.500h12'),
      block(14, 8, 'M2 10.500h12M2 13.500h12'),
      block(14, 13, 'M1 1v14'),
      block(10, 9, 'M14 2v8M3 12v3M7 12v3M11 12v3M1 13.500h14'),
      block(14, 8, 'M3 11.500h8M1 14.500h9M12 11v3h2'),
      block(14, 8, 'M2 11.500h3M8 12.500h2M12 10v5M1 14.500h14'),
      block(10, 9, 'M14 2v7M1 14.500h8M9 12.500h2M13 12v3'),
      block(14, 7, '') + t('#AG', 15, 7),
      g('M1.500 1.500h9v6h-9zM2 7l7-5M13 2v6M11 4h5') + t(':AG', 15, 7),
      outline('') + t('#AG', 15, 7),
      outline('') + t('#TK', 15, 7),
      '|', '<use href="#chip"/>', '>', '|',
      g('M2 3l5 6 3-2-2-4M5 12l4 2 5-4-4-7M14 6l-3 6'), '>', '|',
      '<circle cx="6" cy="10" r="3.500" fill="none" stroke="#909090" stroke-width="2"/>' + g('M7 6V1M9 8l3-4 3 2')
    ];
    document.getElementById('instruments').innerHTML = inst.map(p =>
      p === '|' ? '<div class="hsep"></div>' :
      p === '>' ? '<button class="inst low" aria-label="More"><svg viewBox="0 0 16 10"><path d="M6 2v6l4-3z" fill="#909090"/></svg></button>' :
      `<button class="inst" aria-label="Instrument"><svg viewBox="0 0 16 16">${p}</svg></button>`).join('');

    document.getElementById('leds').innerHTML = [1, 1, 1, 0, 1, 1, 1].map(v => `<div class="led${v ? '' : ' off'}"></div>`).join('');

    // ---------- schematic ----------
    const out = [];
    const wire = (...p) => out.push(`<polyline points="${p.join(' ')}"/>`);

    // wires, x and y pairs
    [
      [86, 80, 86, 294, 97, 294], [97, 276, 97, 478, 152, 478], [107, 276, 107, 596, 577, 596, 577, 564], [118, 276, 118, 284],
      [307, 375, 307, 116, 858, 116, 858, 148], [361, 116, 361, 969, 858, 969, 858, 840],
      [415, 116, 415, 375], [464, 116, 464, 969], [415, 240, 766, 240, 766, 883, 518, 883],
      [307, 262, 642, 262, 642, 861, 410, 861], [307, 375, 307, 553, 415, 553, 415, 375],
      [315, 375, 408, 375], [156, 478, 300, 478], [422, 478, 1142, 478],
      [215, 478, 215, 661], [269, 478, 269, 758, 403, 758], [550, 478, 550, 758, 525, 758],
      [577, 478, 577, 559], [701, 299, 701, 742], [649, 299, 766, 299], [642, 359, 760, 359],
      [642, 402, 695, 402], [701, 429, 760, 429], [701, 596, 760, 596], [642, 623, 695, 623],
      [642, 677, 760, 677], [649, 742, 766, 742],
      [610, 116, 610, 144], [610, 149, 610, 170], [658, 116, 658, 144], [658, 149, 658, 170], [858, 160, 858, 186],
      [804, 478, 804, 522], [804, 527, 804, 560], [853, 478, 853, 560],
      [410, 969, 410, 677, 518, 677, 518, 969], [418, 823, 511, 823],
      [599, 910, 599, 938], [599, 943, 599, 969], [647, 910, 647, 938], [647, 943, 647, 969], [858, 803, 858, 829]
    ].forEach(w => wire(...w.map(v => v + 0.5)));

    // junctions
    [[97, 294], [361, 116], [415, 116], [464, 116], [610, 116], [658, 116], [415, 240], [307, 262], [215, 478], [269, 478],
     [550, 478], [577, 478], [766, 478], [804, 478], [853, 478], [766, 299], [642, 359], [642, 402], [701, 429],
     [642, 623], [642, 677], [464, 677], [410, 861], [518, 883], [410, 969], [464, 969], [518, 969], [599, 969], [647, 969]
    ].forEach(([x, y]) => out.push(`<rect x="${x - 1}" y="${y - 1}" width="2" height="3" class="solid"/>`));

    // vertical resistors
    [[307, 138], [361, 138], [415, 138], [215, 516], [307, 516], [361, 516], [415, 516], [577, 516], [642, 516], [701, 516],
     [853, 516], [215, 624], [361, 629], [464, 629], [410, 704], [464, 704], [518, 704], [410, 927], [464, 927], [518, 927]
    ].forEach(([x, y]) => out.push(`<rect x="${x - 2}" y="${y}" width="6" height="16" class="blank"/>
      <path class="soft" d="M${x + .5} ${y}l3 1.500-6 2.500 6 2.500-6 2.500 6 2.500-6 2.500 3 2"/>`));
    // horizontal resistors
    [[183, 478], [599, 478]].forEach(([x, y]) => out.push(`<rect x="${x}" y="${y - 3}" width="16" height="7" class="blank"/>
      <path class="soft" d="M${x} ${y + .5}l1.500 3 2.500-6 2.500 6 2.500-6 2.500 6 2.500-6 2 3"/>`));

    // grounds, last value flips the symbol
    [[610, 170, 1], [658, 170, 1], [858, 186, 1], [215, 661, 1], [804, 560, 1], [853, 560, 1], [858, 802, -1], [599, 910, -1], [647, 910, -1]
    ].forEach(([x, y, s]) => out.push(`<path d="M${x - 5} ${y + .5}h11M${x - 3} ${y + .5 + 2 * s}h7M${x - 1} ${y + .5 + 4 * s}h3"/>`));

    // capacitors and batteries
    [[610, 144], [658, 144], [804, 522], [599, 938], [647, 938], [577, 559]].forEach(([x, y]) => out.push(`<path d="M${x - 5} ${y + .5}h11M${x - 5} ${y + 4.500}h11"/>`));
    out.push('<path d="M152.500 473v11M155.500 473v11"/>');
    [148, 829].forEach(y => out.push(`<path d="M851 ${y + .5}h14M854 ${y + 3.500}h8M851 ${y + 7.500}h14M854 ${y + 10.500}h8"/>`));
    out.push('<path class="plus" d="M605.500 138v4M606 140.500h3M581.500 566v4M580 567.500h4M595.500 931v4M594 934.500h4"/>');

    // diodes
    [[766, 274], [642, 333], [642, 376], [642, 646], [642, 700], [766, 765]].forEach(([x, y]) =>
      out.push(`<path class="solid" d="M${x - 5} ${y}h11l-4 7h-3z"/><path d="M${x - 5} ${y + 7.500}h11"/>`));

    // transistors: wire x, centre y, base side (-1 left), n or p
    [[307, 375, 1, 'n'], [415, 375, -1, 'n'], [307, 478, -1, 'n'], [415, 478, 1, 'n'], [642, 299, 1, 'p'], [701, 402, -1, 'n'],
     [766, 359, -1, 'p'], [766, 429, -1, 'p'], [701, 623, -1, 'p'], [766, 596, -1, 'n'], [766, 677, -1, 'n'], [642, 742, 1, 'n'],
     [410, 758, -1, 'p'], [518, 758, 1, 'p'], [410, 823, 1, 'p'], [518, 823, -1, 'p']
    ].forEach(([x, y, s, k]) => {
      const c = x + .5 + s * 1.5, b = x + .5 + s * 6, w = x + .5, m = y + .5;
      const head = k === 'n' ? `M${w} ${m + 9}l${s * 5} -1l${-s * 2} -4z` : `M${b - s} ${m - 4}l${-s * 5} -3l${s * 4} -2z`;
      out.push(`<circle class="soft body" cx="${c}" cy="${m}" r="9"/>
        <path class="soft" d="M${b} ${m - 6}v12M${b} ${m}h${s * 5}M${b} ${m - 4}L${w} ${m - 8}M${b} ${m + 4}L${w} ${m + 8}"/>
        <path class="solid" d="${head}"/>`);
    });

    // signal generator symbol
    out.push(`<rect x="91.500" y="256.500" width="32" height="21" fill="#cfe6cf"/>
      <path d="M93 259h8v6h-8zM104 259h7v6h-7zM114 259h8v6h-8z" fill="#f4f4f4" stroke="none"/>
      <path class="soft" d="M94 263l2-2 2 2 2-2M105 261l2 2 2-2M115 263h2v-2h2v2h2M95 271h4M97 269v4M116 271h4"/>
      <circle class="soft" cx="97" cy="274" r="1.500"/><circle class="soft" cx="107.500" cy="274" r="1.500"/><circle class="soft" cx="118" cy="274" r="1.500"/>
      <text x="107" y="272" text-anchor="middle" class="com">COM</text>
      <text x="107" y="253" text-anchor="middle" class="thin">XFG1</text>`);

    // labels: x, baseline of name, baseline of value, name, value, right aligned
    [[312, 128, 139, 'R6', '100Ω'], [366, 128, 139, 'R4', '10kΩ'], [420, 128, 139, 'R7', '100Ω'],
     [617, 140, 151, 'C11', '100µF'], [665, 128, 139, 'C12', '0.1µF'], [867, 139, 150, 'V1', '15V'],
     [772, 271, 280, 'D7', '1N4148'], [633, 292, 302, 'Q28', 'BC556B', 1], [648, 330, 340, 'D12', '1N4148'],
     [648, 373, 383, 'D9', '1N4148'], [711, 395, 405, 'Q15', 'BC546BP'], [776, 351, 361, 'Q7', 'BC556B'], [776, 422, 432, 'Q5', 'BC556B'],
     [582, 515, 525, 'R30', '1kΩ'], [646, 515, 526, 'R10', '3.3kΩ'], [705, 515, 526, 'R20', '22kΩ'],
     [812, 506, 517, 'C5', '18pF'], [857, 515, 526, 'R13', '10kΩ'], [298, 368, 379, 'Q6', 'BC546BP', 1], [425, 368, 379, 'Q8', 'BC546BP'],
     [317, 470, 480, 'Q1', 'BC546BP'], [406, 470, 480, 'Q4', 'BC546BP', 1], [219, 506, 517, 'R11', '27kΩ'], [312, 506, 517, 'R1', '100Ω'],
     [366, 515, 526, 'R17', '5.6kΩ'], [420, 506, 517, 'R8', '100Ω'], [219, 614, 625, 'R18', '10Ω'], [366, 629, 639, 'R2', '1.8kΩ'],
     [468, 629, 639, 'R9', '1.8kΩ'], [414, 695, 706, 'R3', '100Ω'], [468, 704, 715, 'R19', '5.6kΩ'], [522, 695, 706, 'R5', '100Ω'],
     [419, 751, 761, 'Q2', 'BC556B'], [508, 751, 761, 'Q9', 'BC556B', 1], [400, 816, 826, 'Q10', 'BC556B', 1], [528, 816, 826, 'Q3', 'BC556B'],
     [414, 917, 928, 'R14', '100Ω'], [468, 917, 928, 'R16', '10kΩ'], [522, 917, 928, 'R15', '100Ω'],
     [776, 589, 599, 'Q30', 'BC546BP'], [711, 616, 626, 'Q32', 'BC556B'], [648, 643, 653, 'D16', '1N4148'], [776, 670, 680, 'Q29', 'BC546BP'],
     [648, 697, 707, 'D17', '1N4148'], [633, 735, 745, 'Q31', 'BC546BP', 1], [772, 762, 772, 'D15', '1N4148'], [867, 820, 830, 'V2', '15V'],
     [606, 933, 944, 'C4', '100µF'], [654, 922, 933, 'C6', '0.1µF'], [600, 471, 489, 'R31', ''], [597, 471, 489, '', '27kΩ'],
     [584, 544, 557, 'C3', ''], [587, 544, 557, '', '220µF'], [147, 468, 492, 'C2', ''], [142, 468, 492, '', '4.7µF'],
     [184, 471, 489, 'R12', ''], [181, 471, 489, '', '470Ω']
    ].forEach(([x, y1, y2, n, v, end]) => {
      const a = end ? ' text-anchor="end"' : '';
      if (n) out.push(`<text x="${x}" y="${y1}"${a}>${n}</text>`);
      if (v) out.push(`<text x="${x}" y="${y2}"${a}>${v}</text>`);
    });

    document.getElementById('schematic').innerHTML = `<style>
        #sch { fill: none; stroke: #000; shape-rendering: crispEdges; }
        #sch text { fill: #000; stroke: none; font: 700 8px "Liberation Sans", Arial, sans-serif; }
        #sch text.thin { font: 400 9px "Liberation Mono", monospace; }
        #sch text.com { font: 400 6px "Liberation Mono", monospace; fill: #4a704a; }
        #sch .solid { fill: #000; stroke: none; }
        #sch .blank { fill: #fff; stroke: none; }
        #sch .soft { shape-rendering: auto; }
        #sch .body { fill: #fff; }
        #sch .plus { stroke: #c02030; }
      </style><g id="sch" transform="translate(-6 -82)">${out.join('')}</g>`;

    // ---------- oscilloscope trace ----------
    const X0 = 8, X1 = 652, Y0 = 8, Y1 = 291;
    let s = '';
    for (let i = 1; i < 10; i++) {
      const x = Math.round(X0 + i * 64.4) + .5;
      s += `<path d="M${x} ${Y0}V${Y1}" stroke="#bbb" stroke-dasharray="4 3"/>`;
    }
    [55, 102, 197, 244].forEach(y => { s += `<path d="M${X0} ${y + .5}H${X1}" stroke="#bbb" stroke-dasharray="4 3"/>`; });
    for (let i = 1; i < 50; i++) {
      const x = Math.round(X0 + i * 12.88) + .5;
      s += `<path d="M${x} ${i % 5 ? 148 : 146}V${i % 5 ? 152 : 154}" stroke="#fff"/>`;
    }
    s += `<path d="M${X0} ${Y0 + .5}H${X1 + .5}V${Y1 + .5}H${X0}M${X0 - 3} 149.500H${X1 + 3}M330.500 5v4" fill="none" stroke="#fff"/>`;
    s += `<path d="M${X0} 150.500H${X1}" stroke="#fff" stroke-dasharray="4 2"/>`;
    let trace = '';
    for (let x = X0; x <= 599; x += 2) {
      trace += (trace ? 'L' : 'M') + x + ' ' + (149.5 - 63 * Math.sin((x - 12) / 257.3 * 2 * Math.PI)).toFixed(1);
    }
    s += `<path d="${trace}" fill="none" stroke="#fff"/>`;
    s += '<path d="M8.500 8V294" stroke="#30d040"/><path d="M0 0h17l-8.500 9z" fill="#b040e0"/><path d="M0 0h17l-3 3H3z" fill="#40b0e0"/><path d="M8.500 1v6" stroke="#000"/><circle cx="8" cy="155" r="3" fill="none" stroke="#b040c0"/>';
    document.getElementById('scopePlot').innerHTML = s;

    // ---------- bode curve ----------
    s = '';
    [126, 246, 366, 485, 604].forEach(x => { s += `<path d="M${x + .5} 4V420" stroke="#bbb" stroke-dasharray="4 3"/>`; });
    [4, 108, 212, 316].forEach(y => { s += `<path d="M7 ${y + .5}H604" stroke="#bbb" stroke-dasharray="4 3"/>`; });
    s += '<path d="M7 420.500H604M4 212.500h6" stroke="#fff"/><path d="M7.500 4V420" stroke="#d02020"/>';
    s += '<path d="M7 72.500H446Q462 73 472 82Q482 89 502 116L531 157L561 203Q575 225 590 264L604 303" fill="none" stroke="#fff"/>';
    s += '<path d="M4 1h8l-4 5z" fill="none" stroke="#30c0d0"/><circle cx="7.500" cy="72.500" r="2.500" fill="none" stroke="#ddd"/>';
    document.getElementById('bodePlot').innerHTML = s;
  </script>
</body>
</html>
